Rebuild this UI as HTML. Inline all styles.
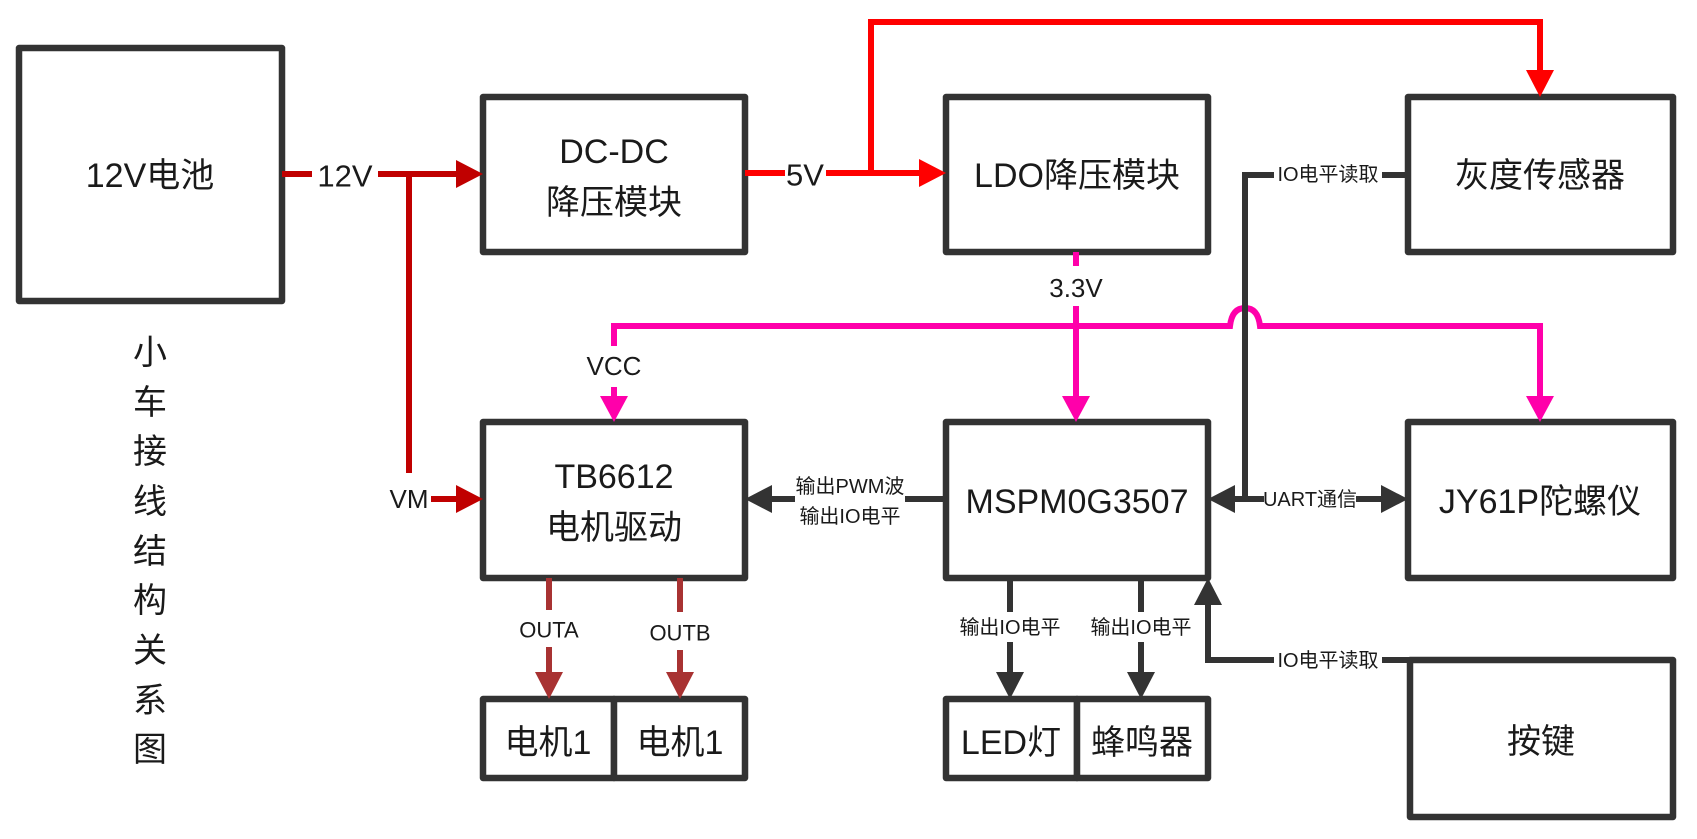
<!DOCTYPE html>
<html><head><meta charset="utf-8"><style>
html,body{margin:0;padding:0;background:#fff;overflow:hidden}
svg{display:block}
text{font-family:"Liberation Sans","Noto Sans CJK SC",sans-serif;fill:#1a1a1a;text-anchor:middle;dominant-baseline:central}
.b{fill:#fff;stroke:#333;stroke-width:6.5;stroke-linejoin:round}
.t{font-size:34px}
.s{font-size:20px}
.m{font-size:26px}
</style></head><body>
<svg width="1697" height="839" viewBox="0 0 1697 839" xmlns="http://www.w3.org/2000/svg">
<rect class="b" x="19" y="48" width="263" height="253"/>
<rect class="b" x="483" y="97" width="262" height="155"/>
<rect class="b" x="946" y="97" width="262" height="155"/>
<rect class="b" x="1408" y="97" width="265" height="155"/>
<rect class="b" x="483" y="422" width="262" height="156"/>
<rect class="b" x="946" y="422" width="262" height="156"/>
<rect class="b" x="1408" y="422" width="265" height="156"/>
<rect class="b" x="483" y="699" width="131" height="79"/>
<rect class="b" x="614" y="699" width="131" height="79"/>
<rect class="b" x="946" y="699" width="131" height="79"/>
<rect class="b" x="1077" y="699" width="131" height="79"/>
<rect class="b" x="1410" y="660" width="263" height="157"/>

<g stroke="#c00000" stroke-width="6" fill="none">
<line x1="282" y1="174" x2="312" y2="174"/>
<line x1="378" y1="174" x2="460" y2="174"/>
<line x1="409" y1="174" x2="409" y2="473"/>
<line x1="431" y1="499" x2="460" y2="499"/>
</g>
<path d="M456,160 L483,174 L456,188z" fill="#c00000"/>
<path d="M456,485 L483,499 L456,513z" fill="#c00000"/>
<g stroke="#ff0000" stroke-width="6" fill="none">
<line x1="745" y1="173" x2="785" y2="173"/>
<line x1="826" y1="173" x2="922" y2="173"/>
<polyline points="871,173 871,22 1540,22 1540,74"/>
</g>
<path d="M919,159 L946,173 L919,187z" fill="#ff0000"/>
<path d="M1526,70 L1540,97 L1554,70z" fill="#ff0000"/>
<g stroke="#ff00aa" stroke-width="6" fill="none">
<line x1="1076" y1="252" x2="1076" y2="266"/>
<line x1="1076" y1="306" x2="1076" y2="400"/>
<path d="M614,346 L614,326 L1230,326 Q1232,308 1245,308 Q1258,308 1260,326 L1540,326 L1540,400"/>
<line x1="614" y1="387" x2="614" y2="400"/>
</g>
<path d="M1062,396 L1076,422 L1090,396z" fill="#ff00aa"/>
<path d="M600,396 L614,422 L628,396z" fill="#ff00aa"/>
<path d="M1526,396 L1540,422 L1554,396z" fill="#ff00aa"/>
<g stroke="#333" stroke-width="6" fill="none">
<line x1="1408" y1="175" x2="1382" y2="175"/>
<polyline points="1274,175 1245,175 1245,499"/>
<line x1="1230" y1="499" x2="1264" y2="499"/>
<line x1="1356" y1="499" x2="1386" y2="499"/>
<line x1="946" y1="499" x2="905" y2="499"/>
<line x1="795" y1="499" x2="768" y2="499"/>
<line x1="1010" y1="578" x2="1010" y2="612"/>
<line x1="1010" y1="642" x2="1010" y2="676"/>
<line x1="1141" y1="578" x2="1141" y2="612"/>
<line x1="1141" y1="642" x2="1141" y2="676"/>
<line x1="1410" y1="660" x2="1382" y2="660"/>
<polyline points="1274,660 1208,660 1208,602"/>
</g>
<path d="M1208,499 L1235,485 L1235,513z" fill="#333"/>
<path d="M1408,499 L1381,485 L1381,513z" fill="#333"/>
<path d="M745,499 L772,485 L772,513z" fill="#333"/>
<path d="M996,672 L1010,699 L1024,672z" fill="#333"/>
<path d="M1127,672 L1141,699 L1155,672z" fill="#333"/>
<path d="M1194,605 L1208,578 L1222,605z" fill="#333"/>
<g stroke="#a83232" stroke-width="6" fill="none">
<line x1="549" y1="578" x2="549" y2="610"/>
<line x1="549" y1="647" x2="549" y2="676"/>
<line x1="680" y1="578" x2="680" y2="612"/>
<line x1="680" y1="650" x2="680" y2="676"/>
</g>
<path d="M535,672 L549,699 L563,672z" fill="#a83232"/>
<path d="M666,672 L680,699 L694,672z" fill="#a83232"/>

<text class="t" x="150" y="176">12V电池</text>
<text class="t" x="614" y="152">DC-DC</text>
<text class="t" x="614" y="203">降压模块</text>
<text class="t" x="1077" y="176">LDO降压模块</text>
<text class="t" x="1540" y="176">灰度传感器</text>
<text class="t" x="614" y="477">TB6612</text>
<text class="t" x="614" y="528">电机驱动</text>
<text class="t" x="1077" y="502">MSPM0G3507</text>
<text class="t" x="1540" y="502">JY61P陀螺仪</text>
<text class="t" x="548" y="743">电机1</text>
<text class="t" x="680" y="743">电机1</text>
<text class="t" x="1011" y="743">LED灯</text>
<text class="t" x="1142" y="743">蜂鸣器</text>
<text class="t" x="1541" y="742">按键</text>
<text class="t" x="150" y="353">小</text><text class="t" x="150" y="403">车</text><text class="t" x="150" y="452">接</text><text class="t" x="150" y="502">线</text><text class="t" x="150" y="552">结</text><text class="t" x="150" y="601">构</text><text class="t" x="150" y="651">关</text><text class="t" x="150" y="701">系</text><text class="t" x="150" y="750">图</text>
<text class="t" style="font-size:31px" x="345" y="176">12V</text>
<text class="t" style="font-size:31px" x="805" y="175">5V</text>
<text class="m" x="1076" y="288">3.3V</text>
<text class="m" x="614" y="366">VCC</text>
<text class="m" x="409" y="499">VM</text>
<text class="s" x="1328" y="175">IO电平读取</text>
<text class="s" x="1328" y="661">IO电平读取</text>
<text class="s" x="1310" y="500">UART通信</text>
<text class="s" x="850" y="487">输出PWM波</text>
<text class="s" x="850" y="517">输出IO电平</text>
<text class="s" x="1010" y="628">输出IO电平</text>
<text class="s" x="1141" y="628">输出IO电平</text>
<text class="s" style="font-size:22px" x="549" y="630">OUTA</text>
<text class="s" style="font-size:22px" x="680" y="633">OUTB</text>
</svg>
</body></html>
